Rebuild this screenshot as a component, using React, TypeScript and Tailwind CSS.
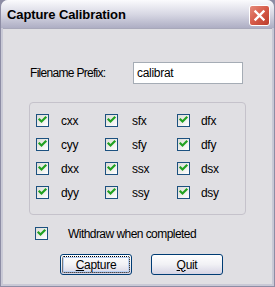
import React from 'react';

const font = { fontFamily: '"Liberation Sans", Arial, sans-serif' };

const CheckBox: React.FC = () => (
  <div className="w-[13px] h-[13px] border border-[#1c5180] bg-gradient-to-br from-[#dcdcd7] to-white flex items-center justify-center shrink-0">
    <svg width="11" height="11" viewBox="0 0 11 11">
      <path d="M2.5 4.5 L4.5 6.5 L8.5 2.5" fill="none" stroke="#21a121" strokeWidth="2.2" strokeLinecap="square" />
    </svg>
  </div>
);

const CheckItem: React.FC<{ label: string; gap: string }> = ({ label, gap }) => (
  <div className="flex items-center h-[13px]">
    <CheckBox />
    <span className={`${gap} text-[12px] tracking-[-0.3px] text-black leading-none`}>{label}</span>
  </div>
);

const rows = [
  ['cxx', 'sfx', 'dfx'],
  ['cyy', 'sfy', 'dfy'],
  ['dxx', 'ssx', 'dsx'],
  ['dyy', 'ssy', 'dsy'],
];

const XpButton: React.FC<{ children: React.ReactNode; focused?: boolean; width: string }> = ({ children, focused, width }) => (
  <button
    className={`${width} h-[21px] rounded-[3px] border border-[#003c74] bg-gradient-to-b from-white via-[#f1f1f5] to-[#d6d4e4] p-[1px] text-[12px] tracking-[-0.3px] text-black`}
  >
    <div
      className={`h-full w-full rounded-[2px] flex items-center justify-center ${
        focused ? 'border border-dotted border-black shadow-[inset_0_0_0_1px_#b9d1f5]' : ''
      }`}
    >
      {children}
    </div>
  </button>
);

export default function App() {
  return (
    <div className="w-[275px] h-[287px] flex flex-col bg-[#8d8da5] p-[1px] pt-0" style={font}>
      <div className="flex-1 flex flex-col rounded-t-[7px] overflow-hidden bg-[#c9c9d6] px-[2px] pb-[2px]">
        {/* title bar */}
        <div className="h-[28px] -mx-[2px] flex items-center justify-between pl-[6px] pr-[4px] bg-gradient-to-b from-[#fbfbfd] via-[#d8d8e4] to-[#aeaec4]">
          <span className="text-[13px] font-bold text-black tracking-[-0.1px] mt-[1px]">Capture Calibration</span>
          <div className="w-[21px] h-[21px] mt-[3px] rounded-[3px] border border-white bg-gradient-to-br from-[#e48a7c] via-[#d65a48] to-[#bb3b2a] flex items-center justify-center">
            <svg width="13" height="13" viewBox="0 0 13 13">
              <path d="M2.5 2.5 L10.5 10.5 M10.5 2.5 L2.5 10.5" stroke="white" strokeWidth="2.4" strokeLinecap="square" />
            </svg>
          </div>
        </div>

        {/* body */}
        <div className="flex-1 bg-[#e0dfe3] flex flex-col pl-[26px] border-t border-[#a8a8ba]">
          <div className="mt-[33px] flex items-center h-[22px]">
            <span className="w-[104px] pl-[1px] text-[12px] tracking-[-0.7px] text-black">Filename Prefix:</span>
            <div className="w-[110px] h-[22px] border border-[#a5acb5] bg-white flex items-center pl-[3px] text-[12px] tracking-[-0.3px] text-black">
              calibrat
            </div>
          </div>

          <div className="mt-[18px] w-[217px] h-[113px] rounded-[4px] border border-[#c5c2cb] pl-[6px] pt-[11px]">
            <div className="grid grid-cols-[69px_72px_1fr] gap-y-[11px]">
              {rows.map((r) => (
                <React.Fragment key={r[0]}>
                  <CheckItem label={r[0]} gap="ml-[12px]" />
                  <CheckItem label={r[1]} gap="ml-[14px]" />
                  <CheckItem label={r[2]} gap="ml-[11px]" />
                </React.Fragment>
              ))}
            </div>
          </div>

          <div className="mt-[12px] ml-[6px] flex items-center h-[13px]">
            <CheckBox />
            <span className="ml-[20px] text-[12px] tracking-[-0.55px] text-black">Withdraw when completed</span>
          </div>

          <div className="mt-[14px] ml-[31px] flex gap-[19px]">
            <XpButton width="w-[72px]" focused>
              <span><span className="underline">C</span>apture</span>
            </XpButton>
            <XpButton width="w-[72px]">
              <span><span className="underline">Q</span>uit</span>
            </XpButton>
          </div>
        </div>
      </div>
    </div>
  );
}
